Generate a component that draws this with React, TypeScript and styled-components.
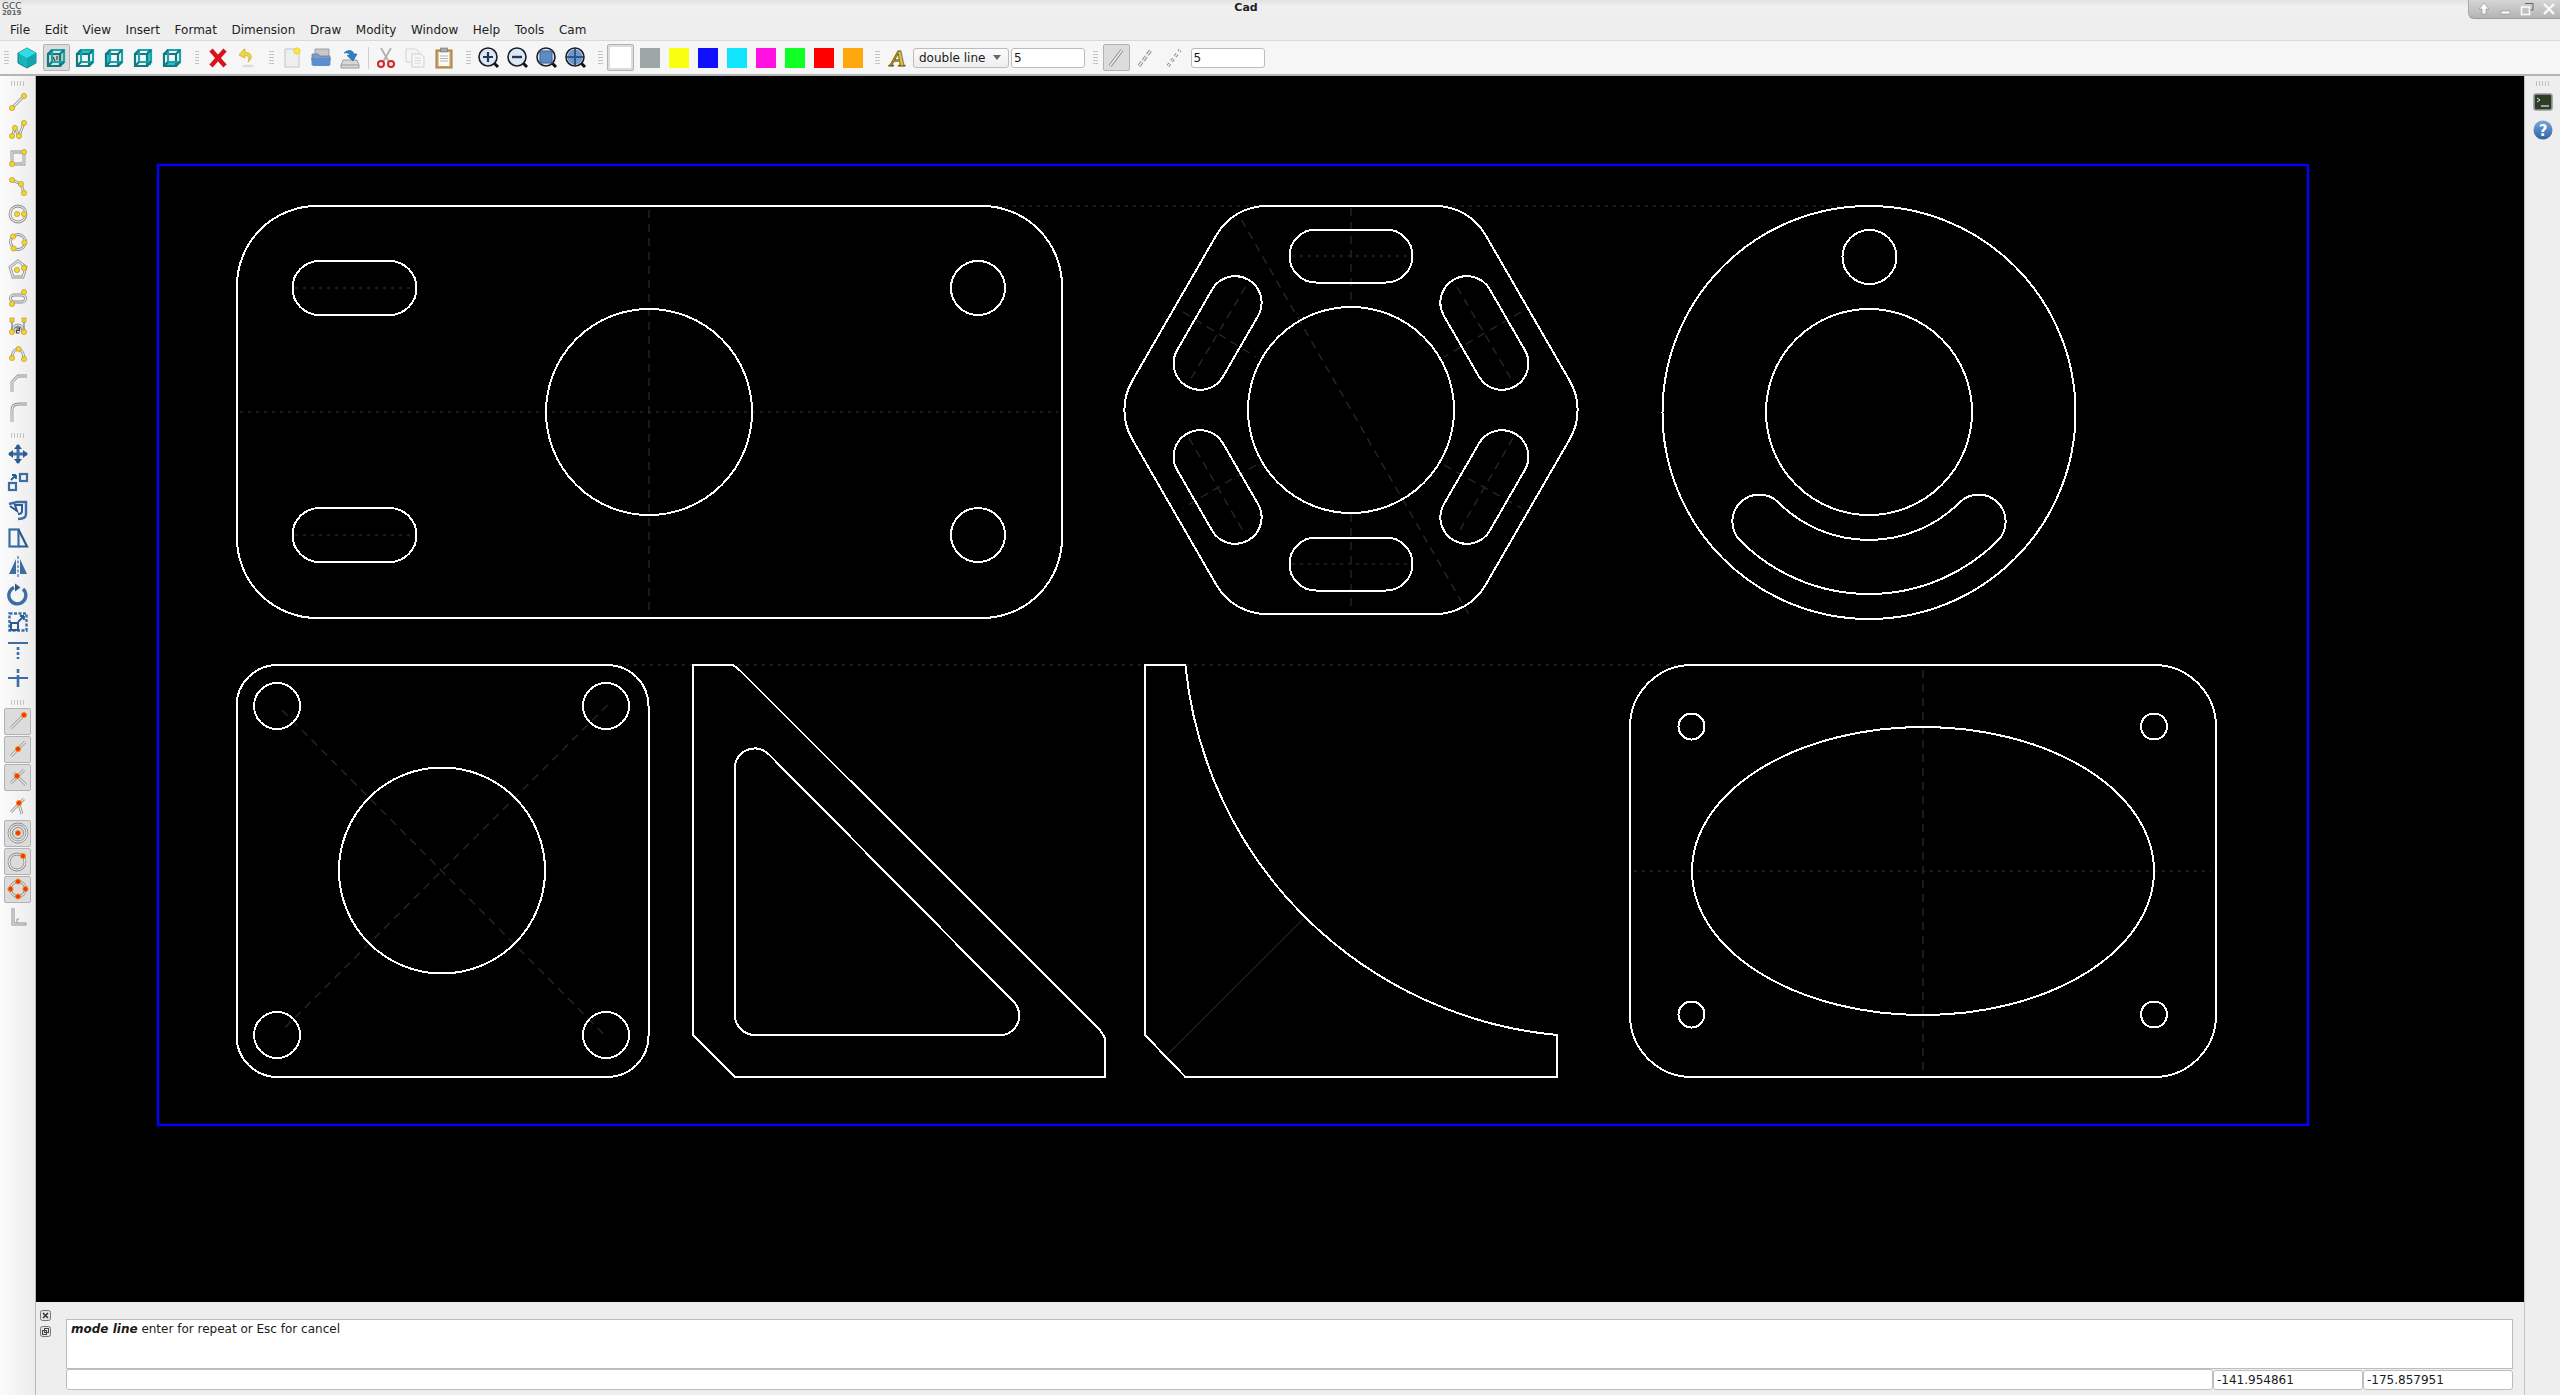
import React from 'react'
import styled, { createGlobalStyle } from 'styled-components'

const GlobalStyle = createGlobalStyle`
    html, body {
        margin: 0;
        padding: 0;
        background: #eeeeee;
    }
    body {
        font-family: 'DejaVu Sans', sans-serif;
        font-size: 12px;
        color: #1a1a1a;
    }
`

const Window = styled.div`
    width: 2560px;
    height: 1395px;
    display: flex;
    flex-direction: column;
    overflow: hidden;
    background: #eeeeee;
`

const TitleRow = styled.div`
    height: 21px;
    display: flex;
    align-items: flex-start;
    background: linear-gradient(#e2e2e2, #efefef 30%, #eeeeee);
`

const Logo = styled.div`
    width: 24px;
    padding: 2px 0 0 2px;
    box-sizing: border-box;
    font-size: 9px;
    line-height: 8px;
    color: #444444;
`

const LogoYear = styled.div`
    font-size: 7px;
    line-height: 7px;
    font-weight: bold;
    color: #666666;
`

const Title = styled.div`
    flex: 1;
    text-align: center;
    font-weight: bold;
    font-size: 11px;
    line-height: 16px;
    color: #222222;
`

const WindowButtons = styled.div`
    width: 92px;
    height: 19px;
    box-sizing: border-box;
    padding: 0 4px 0 8px;
    display: flex;
    align-items: center;
    justify-content: space-between;
    background: linear-gradient(#d6d6d6, #b4b4b4);
    border-bottom: 1px solid #9c9c9c;
    border-left: 1px solid #a8a8a8;
    border-bottom-left-radius: 6px;
`

const MenuBar = styled.div`
    height: 19px;
    padding-left: 2.7px;
    display: flex;
    align-items: center;
    background: #eeeeee;
`

const MenuItem = styled.div`
    padding: 0 7.3px;
    font-size: 12px;
    line-height: 19px;
    color: #222222;
`

const TopBar = styled.div`
    height: 36px;
    box-sizing: border-box;
    display: flex;
    align-items: center;
    background: #f6f6f6;
    border-top: 1px solid #d9d9d9;
    border-bottom: 2px solid #b4b4b4;
`

const Group = styled.div`
    display: flex;
    align-items: center;
    margin-right: 4px;
`

const HandleV = styled.div<{ $narrow?: boolean }>`
    width: ${(p) => (p.$narrow ? '11.5px' : '12.5px')};
    height: 16px;
    flex: none;
    background-image: radial-gradient(circle, #aeaeae 0.7px, transparent 1px);
    background-size: 2.5px 3px;
    background-repeat: repeat;
    background-origin: content-box;
    background-clip: content-box;
    box-sizing: border-box;
    padding: 0 ${(p) => (p.$narrow ? '3.5px' : '4px')};
`

const Separator = styled.div`
    width: 1px;
    height: 22px;
    margin: 0 2.5px 0 3px;
    background: #cfcfcf;
`

const ToolButton = styled.div<{ $checked?: boolean }>`
    width: 27px;
    height: 27px;
    margin: 0 1px;
    flex: none;
    box-sizing: border-box;
    display: flex;
    align-items: center;
    justify-content: center;
    border-radius: 2px;
    border: 1px solid ${(p) => (p.$checked ? '#b2b2b2' : 'transparent')};
    background: ${(p) => (p.$checked ? '#dcdcdc' : 'transparent')};
`

const Swatch = styled.div<{ $color: string }>`
    width: 20px;
    height: 20px;
    background: ${(p) => p.$color};
`

const WhiteSwatch = styled(Swatch)`
    width: 21px;
    height: 21px;
`

const Combo = styled.div`
    width: 96px;
    height: 20px;
    margin-left: 0.5px;
    box-sizing: border-box;
    padding: 0 7px 0 5px;
    display: flex;
    align-items: center;
    justify-content: space-between;
    background: linear-gradient(#fbfbfb, #eeeeee);
    border: 1px solid #bdbdbd;
    border-radius: 3px;
`

const ComboArrow = styled.div`
    width: 0;
    height: 0;
    border-left: 4px solid transparent;
    border-right: 4px solid transparent;
    border-top: 5px solid #666666;
`

const NumberInput = styled.input`
    width: 74px;
    height: 20px;
    box-sizing: border-box;
    padding: 0 2px;
    margin-left: 2px;
    font: 12px 'DejaVu Sans', sans-serif;
    color: #1a1a1a;
    background: #ffffff;
    border: 1px solid #bdbdbd;
    border-radius: 3px;
    outline: none;
`

const Body = styled.div`
    flex: 1;
    display: flex;
    min-height: 0;
`

const LeftBar = styled.div`
    width: 36px;
    flex: none;
    box-sizing: border-box;
    display: flex;
    flex-direction: column;
    align-items: center;
    background: linear-gradient(to right, #fcfcfc, #ececec);
    border-right: 1px solid #b8b8b8;
`

const VGroup = styled.div`
    display: flex;
    flex-direction: column;
    align-items: center;
    margin-bottom: 3.5px;
`

const HandleH = styled.div`
    width: 16px;
    height: 12px;
    box-sizing: border-box;
    padding: 5px 0 2px;
    background-image: radial-gradient(circle, #aeaeae 0.7px, transparent 1px);
    background-size: 3px 2.5px;
    background-origin: content-box;
    background-clip: content-box;
`

const VButton = styled(ToolButton)`
    margin: 0.5px 0;
`

const Center = styled.div`
    flex: 1;
    min-width: 0;
    display: flex;
    flex-direction: column;
`

const CanvasArea = styled.div`
    flex: 1;
    min-height: 0;
    background: #000000;
`

const CanvasSvg = styled.svg`
    display: block;
    width: 100%;
    height: 100%;
`

const Dock = styled.div`
    height: 93px;
    flex: none;
    display: flex;
    background: #eeeeee;
`

const DockTitle = styled.div`
    width: 30px;
    flex: none;
    box-sizing: border-box;
    padding: 8px 0 0 4px;
    display: flex;
    flex-direction: column;
    gap: 5px;
`

const DockButton = styled.svg`
    width: 11px;
    height: 11px;
    display: block;
`

const DockContent = styled.div`
    width: 2447px;
    padding-top: 17px;
    display: flex;
    flex-direction: column;
`

const History = styled.div`
    height: 50px;
    box-sizing: border-box;
    padding: 1px 4px;
    font-size: 12px;
    line-height: 16px;
    background: #ffffff;
    border: 1px solid #bdbdbd;
`

const ModeName = styled.b`
    font-style: italic;
`

const CommandRow = styled.div`
    display: flex;
    align-items: center;
`

const CommandInput = styled.div`
    width: 2147px;
    height: 21px;
    flex: none;
    box-sizing: border-box;
    background: #ffffff;
    border: 1px solid #bdbdbd;
    border-radius: 3px;
`

const CoordField = styled.div`
    flex: 1;
    height: 20px;
    box-sizing: border-box;
    padding-left: 3px;
    font-size: 12px;
    line-height: 18px;
    background: #ffffff;
    border: 1px solid #bdbdbd;
    border-radius: 3px;
`

const RightBar = styled.div`
    width: 36px;
    flex: none;
    box-sizing: border-box;
    display: flex;
    flex-direction: column;
    align-items: center;
    background: #eeeeee;
    border-left: 1px solid #c4c4c4;
`

const SmallButton = styled.div`
    width: 28px;
    height: 28px;
    margin-left: 1px;
    display: flex;
    align-items: center;
    justify-content: center;
`

const Ic = ({ children }: { children: React.ReactNode }) => (
    <svg width="24" height="24" viewBox="0 0 24 24" fill="none" style={{ display: 'block' }}>
        {children}
    </svg>
)

/* ---------- top toolbar icons ---------- */

const SolidCube = () => (
    <Ic>
        <polygon points="12,2 21,7 21,17 12,22 3,17 3,7" fill="#18b4bb" stroke="#127d84" strokeWidth="1" />
        <polygon points="12,2 21,7 12,12 3,7" fill="#30dde2" />
        <polygon points="12,12 21,7 21,17 12,22" fill="#13a5ac" />
    </Ic>
)

const WireCube = ({ face }: { face: number }) => (
    <Ic>
        {face === 0 && <polygon points="8,7 19,7 19,17 8,17" fill="#c9ccc8" />}
        {face === 1 && <polygon points="5,4 16,4 20,8 9,8" fill="#2cc4ca" />}
        {face === 2 && <polygon points="4,8 8,4 8,15 4,19" fill="#2cc4ca" />}
        {face === 3 && <polygon points="16,4 20,8 20,20 16,16" fill="#2cc4ca" />}
        {face === 4 && <polygon points="4,19 16,19 20,15 8,15" fill="#2cc4ca" />}
        <path d="M4 8H16V20H4Z" stroke="#0f7c82" strokeWidth="2.2" />
        <path d="M8 4H20V16H8Z" stroke="#19a5ab" strokeWidth="2.2" />
        <path d="M4 8L8 4M16 8L20 4M16 20L20 16M4 20L8 16" stroke="#0f7c82" strokeWidth="2.2" />
        {face === 0 && <path d="M9 11L11 15M13 10V14" stroke="#222" strokeWidth="1" />}
    </Ic>
)

const DeleteIcon = () => (
    <Ic>
        <path d="M5 4L19 20M19 4L5 20" stroke="#d8121a" strokeWidth="4.4" />
    </Ic>
)

const UndoIcon = () => (
    <Ic>
        <path d="M9 3L4 9L10 12L10 9.5C13 9.5 15 11 13 16C17 14 18.5 6.5 10 6.2V3Z" fill="#f2d53c" stroke="#c9a824" strokeWidth="0.7" />
        <ellipse cx="13" cy="20" rx="6" ry="1.5" fill="#dddddd" />
    </Ic>
)

const NewIcon = () => (
    <Ic>
        <path d="M5 3H19V21H5Z" fill="#efefef" stroke="#c4c4c4" />
        <circle cx="17" cy="5" r="3.2" fill="#f7e743" stroke="#e3c820" strokeWidth="0.6" />
    </Ic>
)

const OpenIcon = () => (
    <Ic>
        <path d="M6 3H20V12H6Z" fill="#c8c8c8" stroke="#8f8f8f" strokeWidth="0.8" />
        <path d="M3 8H9L11 10H21V19H3Z" fill="#7e9cc4" stroke="#6a7f9e" strokeWidth="0.8" />
        <path d="M2 12H22L20 20H4Z" fill="#5b8fd0" />
    </Ic>
)

const SaveIcon = () => (
    <Ic>
        <path d="M5 14L3 19V22H21V19L19 14Z" fill="#d8d8d8" stroke="#8c8c8c" strokeWidth="0.8" />
        <path d="M3 19H21" stroke="#8c8c8c" strokeWidth="0.8" />
        <path d="M6 7C10 3 15 4 16 8L19 8L15 15L9 9.5L12 9C11 7 8.5 6.5 6 7Z" fill="#2e7fc9" stroke="#1c5c9c" strokeWidth="0.6" />
    </Ic>
)

const CutIcon = () => (
    <Ic>
        <path d="M7 2L15 16M17 2L9 16" stroke="#b0b0b0" strokeWidth="1.8" />
        <circle cx="7" cy="18" r="3" stroke="#d8252a" strokeWidth="2" />
        <circle cx="17" cy="18" r="3" stroke="#d8252a" strokeWidth="2" />
    </Ic>
)

const CopyIcon = () => (
    <Ic>
        <path d="M3 3H13L16 6V16H3Z" fill="#f4f4f4" stroke="#d4d4d4" />
        <path d="M9 8H18L21 11V21H9Z" fill="#f7f7f7" stroke="#cfcfcf" />
        <path d="M11.5 12H18M11.5 14.5H18M11.5 17H18" stroke="#d8d8d8" />
    </Ic>
)

const PasteIcon = () => (
    <Ic>
        <rect x="4" y="4" width="16" height="18" fill="#c59a5c" stroke="#a87b3c" />
        <rect x="6.5" y="6" width="11" height="14" fill="#fafafa" />
        <rect x="8.5" y="2" width="7" height="4" fill="#a8a8a8" stroke="#6f6f6f" strokeWidth="0.6" />
        <path d="M8 10H16M8 12.5H16M8 15H16" stroke="#b4b4b4" />
    </Ic>
)

const ZoomIcon = ({ glyph }: { glyph: string }) => (
    <Ic>
        <path d="M17 17L21 21" stroke="#111" strokeWidth="3" />
        <circle cx="11" cy="11" r="9" fill="#dbe9f5" stroke="#1b1b28" strokeWidth="1.6" />
        {glyph === 'in' && <path d="M6 11H16M11 6V16" stroke="#2a3550" strokeWidth="2.2" />}
        {glyph === 'out' && <path d="M6 11H16" stroke="#2a3550" strokeWidth="2.4" />}
        {glyph === 'fit' && <rect x="5" y="5" width="12" height="12" fill="#5f8cc0" stroke="#3c5f90" />}
        {glyph === 'all' && (
            <>
                <circle cx="11" cy="11" r="7.5" fill="#6f97c8" />
                <path d="M3 11H19M11 3V19" stroke="#2f5488" strokeWidth="2" />
            </>
        )}
    </Ic>
)

const FontIcon = () => (
    <Ic>
        <text
            x="12"
            y="20"
            textAnchor="middle"
            fontFamily="'Liberation Serif', serif"
            fontWeight="bold"
            fontStyle="italic"
            fontSize="24"
            fill="#e9c536"
            stroke="#5f5312"
            strokeWidth="0.8"
        >
            A
        </text>
    </Ic>
)

const LineStyle = ({ dash }: { dash?: string }) => (
    <Ic>
        <path d="M6 20L18 4" stroke="#8d8d8d" strokeWidth="3.4" strokeDasharray={dash} />
        <path d="M6 20L18 4" stroke="#f1f1f1" strokeWidth="1.4" strokeDasharray={dash} />
    </Ic>
)

/* ---------- side toolbar icons ---------- */

const Dbl = ({ d }: { d: string }) => (
    <>
        <path d={d} stroke="#8e8e8e" strokeWidth="2.8" />
        <path d={d} stroke="#ededed" strokeWidth="1.2" />
    </>
)

const Dot = ({ x, y }: { x: number; y: number }) => <circle cx={x} cy={y} r="2.6" fill="#f2d534" stroke="#b99c22" strokeWidth="0.7" />

const Snap = ({ x, y }: { x: number; y: number }) => <circle cx={x} cy={y} r="2.6" fill="#ff3300" stroke="#e09a30" strokeWidth="1" />

const circlePath = (cx: number, cy: number, r: number) => `M${cx - r} ${cy}A${r} ${r} 0 1 1 ${cx + r} ${cy}A${r} ${r} 0 1 1 ${cx - r} ${cy}`

const drawIcons: React.ReactNode[] = [
    <Ic key="line">
        <Dbl d="M6 18L18 6" />
        <Dot x={6} y={18} />
        <Dot x={18} y={6} />
    </Ic>,
    <Ic key="poly">
        <Dbl d="M6 18L9 10L13 18L18 5" />
        <Dot x={6} y={18} />
        <Dot x={9} y={10} />
        <Dot x={13} y={18} />
        <Dot x={18} y={5} />
    </Ic>,
    <Ic key="rect">
        <Dbl d="M6 6H18V18H6Z" />
        <Dot x={18} y={6} />
        <Dot x={6} y={18} />
    </Ic>,
    <Ic key="multi">
        <Dbl d="M6 6L15 10L18 19" />
        <Dot x={6} y={6} />
        <Dot x={15} y={10} />
        <Dot x={18} y={19} />
    </Ic>,
    <Ic key="circle">
        <Dbl d={circlePath(12, 12, 8)} />
        <Dot x={11} y={12} />
        <Dot x={18} y={12} />
    </Ic>,
    <Ic key="circle3">
        <Dbl d={circlePath(12, 12, 7.5)} />
        <Dot x={7} y={6.5} />
        <Dot x={18.5} y={12.5} />
        <Dot x={7.5} y={18.5} />
    </Ic>,
    <Ic key="polygon">
        <Dbl d="M12 3L20 9L17 19H7L4 9Z" />
        <Dot x={11} y={12} />
        <Dot x={18} y={10} />
    </Ic>,
    <Ic key="slot">
        <Dbl d="M8 9H16A3.5 3.5 0 0 1 16 16H8A3.5 3.5 0 0 1 8 9Z" />
        <Dot x={18} y={6} />
        <Dot x={6} y={18} />
    </Ic>,
    <Ic key="text">
        <Dbl d="M6 18A6 7 0 0 1 18 18M9 18A3 4 0 0 1 15 18" />
        <rect x="4" y="4" width="4" height="4" fill="#f2d534" stroke="#b99c22" strokeWidth="0.7" />
        <rect x="16" y="4" width="4" height="4" fill="#f2d534" stroke="#b99c22" strokeWidth="0.7" />
        <path d="M6 8V18M18 8V18" stroke="#8e8e8e" strokeWidth="1.4" />
        <path d="M10.5 14H13.5V16.5H10.5V19H13.5" stroke="#444" strokeWidth="1.2" />
        <Dot x={6} y={18} />
        <Dot x={18} y={18} />
    </Ic>,
    <Ic key="arc">
        <Dbl d="M6 16C6 4 18 4 18 17" />
        <Dot x={6} y={16} />
        <Dot x={12.5} y={7} />
        <Dot x={18} y={17} />
    </Ic>,
    <Ic key="chamfer">
        <Dbl d="M6 22V12L12 6H21" />
    </Ic>,
    <Ic key="fillet">
        <Dbl d="M6 24V12Q6 6 13 6H21" />
    </Ic>,
]

const blue = '#3c6ea4'
const deepBlue = '#2c5a92'

const modifyIcons: React.ReactNode[] = [
    <Ic key="move">
        <path d="M12 3V21M3 12H21" stroke={blue} strokeWidth="3" />
        <path d="M12 2L16 7H8ZM12 22L16 17H8ZM2 12L7 8V16ZM22 12L17 8V16Z" fill={deepBlue} />
    </Ic>,
    <Ic key="copy">
        <rect x="14" y="4" width="7" height="7" stroke={blue} strokeWidth="2.2" />
        <rect x="3" y="13" width="7" height="7" stroke={blue} strokeWidth="2.2" />
        <path d="M5 10L10 5M10 5H6M10 5V9" stroke={deepBlue} strokeWidth="1.8" />
    </Ic>,
    <Ic key="offset">
        <path d="M3 6L11 4H20V16C20 19 17 21 12 21" stroke={blue} strokeWidth="2.4" />
        <path d="M4 8L11 13L9 7H16V13C16 15 14 16 12 16" stroke={deepBlue} strokeWidth="2" />
    </Ic>,
    <Ic key="stretch">
        <rect x="3.5" y="3.5" width="9" height="17" stroke={blue} strokeWidth="2.2" />
        <path d="M12.5 3.5L21 20.5H12.5" stroke={deepBlue} strokeWidth="2.2" />
    </Ic>,
    <Ic key="mirror">
        <path d="M10 5V20H3Z" fill={blue} />
        <path d="M14 5V20H21Z" fill={blue} />
        <path d="M12 2V23" stroke="#7fa3cc" strokeWidth="2" strokeDasharray="3 1.5" />
    </Ic>,
    <Ic key="rotate">
        <path d="M17 7A8.5 8.5 0 1 1 8 5.5" stroke={blue} strokeWidth="3.4" />
        <path d="M9 1.5V9.5L14.5 5.5Z" fill={deepBlue} />
    </Ic>,
    <Ic key="scale">
        <rect x="3.5" y="3.5" width="17" height="17" stroke={blue} strokeWidth="2.4" strokeDasharray="3 1.5" />
        <rect x="5" y="13" width="7" height="7" stroke={deepBlue} strokeWidth="2" />
        <path d="M12 12L18 6M18 6H14M18 6V10" stroke={deepBlue} strokeWidth="1.8" />
    </Ic>,
    <Ic key="trim">
        <path d="M2 5H22" stroke={blue} strokeWidth="2" />
        <path d="M12 9V21" stroke={blue} strokeWidth="2.6" strokeDasharray="3 2" />
    </Ic>,
    <Ic key="extend">
        <path d="M2 12H22" stroke={blue} strokeWidth="2" />
        <path d="M12 3V7M12 9V21" stroke={blue} strokeWidth="2.6" />
    </Ic>,
]

const snapIcons: { icon: React.ReactNode; checked: boolean }[] = [
    {
        checked: true,
        icon: (
            <Ic>
                <Dbl d="M5 19L17 7" />
                <Snap x={18} y={6} />
            </Ic>
        ),
    },
    {
        checked: true,
        icon: (
            <Ic>
                <Dbl d="M5 19L19 5" />
                <Snap x={12} y={12} />
            </Ic>
        ),
    },
    {
        checked: true,
        icon: (
            <Ic>
                <Dbl d="M5 18L18 5M8 8L20 20" />
                <Snap x={11} y={11} />
            </Ic>
        ),
    },
    {
        checked: false,
        icon: (
            <Ic>
                <Dbl d="M5 19L18 6M13 11L16 21" />
                <Snap x={13} y={10} />
            </Ic>
        ),
    },
    {
        checked: true,
        icon: (
            <Ic>
                <Dbl d={circlePath(12, 12, 9)} />
                <path d={circlePath(12, 12, 5.5)} stroke="#8e8e8e" strokeWidth="1" />
                <Snap x={12} y={12} />
            </Ic>
        ),
    },
    {
        checked: true,
        icon: (
            <Ic>
                <Dbl d={circlePath(11, 13, 8)} />
                <Snap x={17} y={7} />
            </Ic>
        ),
    },
    {
        checked: true,
        icon: (
            <Ic>
                <Dbl d={circlePath(12, 12, 7.5)} />
                <Snap x={12} y={4.5} />
                <Snap x={12} y={19.5} />
                <Snap x={4.5} y={12} />
                <Snap x={19.5} y={12} />
            </Ic>
        ),
    },
    {
        checked: false,
        icon: (
            <Ic>
                <path d="M6 3V20H20" stroke="#8e8e8e" strokeWidth="1" />
                <path d="M8 3V18H20V20M11 18V14H13" stroke="#8e8e8e" strokeWidth="1" />
            </Ic>
        ),
    },
]

/* ---------- the drawing ---------- */

type Seg = [number, number, number, number]

const partStroke = { fill: 'none', stroke: '#ffffff', strokeWidth: 2, shapeRendering: 'crispEdges' as const }

const roundedPoly = (pts: number[][], r: number) => {
    const t = r * Math.tan(Math.PI / 6)
    const n = pts.length
    let d = ''
    pts.forEach((v, i) => {
        const prev = pts[(i + n - 1) % n]
        const next = pts[(i + 1) % n]
        const lp = Math.hypot(prev[0] - v[0], prev[1] - v[1])
        const ln = Math.hypot(next[0] - v[0], next[1] - v[1])
        const a = [v[0] + ((prev[0] - v[0]) * t) / lp, v[1] + ((prev[1] - v[1]) * t) / lp]
        const b = [v[0] + ((next[0] - v[0]) * t) / ln, v[1] + ((next[1] - v[1]) * t) / ln]
        d += `${i === 0 ? 'M' : 'L'}${a[0]} ${a[1]}A${r} ${r} 0 0 1 ${b[0]} ${b[1]}`
    })
    return d + 'Z'
}

const hexagon = roundedPoly(
    [
        [1233.2, 206],
        [1468.8, 206],
        [1586.6, 410],
        [1468.8, 614],
        [1233.2, 614],
        [1115.4, 410],
    ],
    58,
)

const hexSlots: [number, number, number][] = [
    [1351, 256, 0],
    [1484.4, 333, 60],
    [1484.4, 487, -60],
    [1351, 564, 0],
    [1217.6, 487, 60],
    [1217.6, 333, -60],
]

const dotted: Seg[] = [
    [997, 206, 1846, 206],
    [618, 665, 1677, 665],
    [240, 412, 1058, 412],
    [295, 288, 413, 288],
    [295, 535, 413, 535],
    [1292, 256, 1410, 256],
    [1292, 564, 1410, 564],
    [1634, 871, 2211, 871],
]

const dashed: Seg[] = [
    [649, 210, 649, 615],
    [1351, 208, 1351, 306],
    [1351, 514, 1351, 612],
    [1241.6, 220, 1468.6, 614],
    [1183, 312, 1256, 357],
    [1521, 312, 1444, 357],
    [1256, 465, 1183, 508],
    [1444, 465, 1521, 508],
    [1245.4, 287, 1189, 382],
    [1457, 287, 1513, 382],
    [1189, 438, 1245.4, 535],
    [1513, 438, 1457, 535],
    [282, 710, 605.5, 1036],
    [607.5, 705, 281.6, 1031],
    [1923, 670, 1923, 1075],
]

const Segments = ({ list, dash }: { list: Seg[]; dash: string }) => (
    <path d={list.map((s) => `M${s[0]} ${s[1]}L${s[2]} ${s[3]}`).join('')} stroke="#262626" strokeWidth="1.4" strokeDasharray={dash} fill="none" />
)

const Slot = ({ x, y, angle }: { x: number; y: number; angle: number }) => (
    <rect x={x - 61.5} y={y - 26.5} width="123" height="53" rx="26.5" transform={`rotate(${angle} ${x} ${y})`} {...partStroke} />
)

const Hole = ({ x, y, r }: { x: number; y: number; r: number }) => <circle cx={x} cy={y} r={r} {...partStroke} />

const Drawing = () => (
    <CanvasSvg viewBox="36 76 2488 1226">
        <rect x="158" y="165" width="2150" height="960" fill="none" stroke="#0000ff" strokeWidth="2.4" />
        <Segments list={dotted} dash="3 5" />
        <Segments list={dashed} dash="8 6" />
        <path d="M1305.6 916.7L1167 1055" stroke="#222222" strokeWidth="1.2" />

        <rect x="237" y="206" width="825" height="412" rx="80" {...partStroke} />
        <Hole x={649} y={412} r={103} />
        <rect x="292.5" y="261" width="124" height="54" rx="27" {...partStroke} />
        <rect x="292.5" y="508" width="124" height="54" rx="27" {...partStroke} />
        <Hole x={978} y={288} r={27} />
        <Hole x={978} y={535} r={27} />

        <path d={hexagon} {...partStroke} />
        <Hole x={1351} y={410} r={103} />
        {hexSlots.map((s) => (
            <Slot key={`${s[0]}-${s[1]}`} x={s[0]} y={s[1]} angle={s[2]} />
        ))}

        <Hole x={1869} y={412.5} r={206.5} />
        <Hole x={1869} y={412} r={103} />
        <Hole x={1869.5} y={257} r={27} />
        <path d="M1740.3 540.7A182 182 0 0 0 1997.7 540.7A27 27 0 0 0 1959.5 502.5A128 128 0 0 1 1778.5 502.5A27 27 0 0 0 1740.3 540.7Z" {...partStroke} />

        <rect x="236.5" y="665" width="412" height="412" rx="41" {...partStroke} />
        <Hole x={442} y={870.5} r={103} />
        <Hole x={277} y={706} r={23} />
        <Hole x={606} y={706} r={23} />
        <Hole x={277} y={1035} r={23} />
        <Hole x={606} y={1035} r={23} />

        <path d="M693 665H733L739.5 670L1099.8 1030L1105 1038V1077H735L693 1035Z" {...partStroke} />
        <path d="M735 772A20 20 0 0 1 769.5 755L1011.8 1000A20 20 0 0 1 1004 1035H755A20 20 0 0 1 735 1015Z" {...partStroke} />

        <path d="M1145 665H1185.4A412 412 0 0 0 1557 1035V1077H1185.4L1145 1035Z" {...partStroke} />

        <rect x="1630" y="665" width="586" height="412" rx="62" {...partStroke} />
        <ellipse cx="1923" cy="871" rx="231" ry="144" {...partStroke} />
        <Hole x={1691.5} y={726.5} r={13} />
        <Hole x={2154} y={726.5} r={13} />
        <Hole x={1691.5} y={1014.5} r={13} />
        <Hole x={2154} y={1014.5} r={13} />
    </CanvasSvg>
)

const menus = ['File', 'Edit', 'View', 'Insert', 'Format', 'Dimension', 'Draw', 'Modity', 'Window', 'Help', 'Tools', 'Cam']
const colors = ['#9fa6a8', '#f8ff10', '#1010ff', '#10e4ff', '#ff10e0', '#10ff24', '#ff0000', '#ffa80e']

const App = () => (
    <Window>
        <GlobalStyle />
        <TitleRow>
            <Logo>
                GCC
                <LogoYear>2019</LogoYear>
            </Logo>
            <Title>Cad</Title>
            <WindowButtons>
                <svg width="14" height="14" viewBox="0 0 14 14">
                    <path d="M7 1L12 7H9V12H5V7H2Z" fill="#fafafa" stroke="#8a8a8a" strokeWidth="0.6" />
                </svg>
                <svg width="14" height="14" viewBox="0 0 14 14">
                    <rect x="2" y="9" width="9" height="3" fill="#fafafa" stroke="#8a8a8a" strokeWidth="0.6" />
                </svg>
                <svg width="14" height="14" viewBox="0 0 14 14">
                    <path d="M5 1.5H13V8H9" fill="none" stroke="#666" strokeWidth="1" />
                    <rect x="1.5" y="5" width="8" height="7.5" fill="none" stroke="#fafafa" strokeWidth="1.6" />
                </svg>
                <svg width="14" height="14" viewBox="0 0 14 14">
                    <path d="M2 2L12 12M12 2L2 12" stroke="#fafafa" strokeWidth="2.4" />
                </svg>
            </WindowButtons>
        </TitleRow>
        <MenuBar>
            {menus.map((m) => (
                <MenuItem key={m}>{m}</MenuItem>
            ))}
        </MenuBar>
        <TopBar>
            <Group>
                <HandleV />
                <ToolButton>
                    <SolidCube />
                </ToolButton>
                <ToolButton $checked>
                    <WireCube face={0} />
                </ToolButton>
                <ToolButton>
                    <WireCube face={1} />
                </ToolButton>
                <ToolButton>
                    <WireCube face={2} />
                </ToolButton>
                <ToolButton>
                    <WireCube face={3} />
                </ToolButton>
                <ToolButton>
                    <WireCube face={4} />
                </ToolButton>
            </Group>
            <Group>
                <HandleV />
                <ToolButton>
                    <DeleteIcon />
                </ToolButton>
                <ToolButton>
                    <UndoIcon />
                </ToolButton>
            </Group>
            <Group>
                <HandleV />
                <ToolButton>
                    <NewIcon />
                </ToolButton>
                <ToolButton>
                    <OpenIcon />
                </ToolButton>
                <ToolButton>
                    <SaveIcon />
                </ToolButton>
                <Separator />
                <ToolButton>
                    <CutIcon />
                </ToolButton>
                <ToolButton>
                    <CopyIcon />
                </ToolButton>
                <ToolButton>
                    <PasteIcon />
                </ToolButton>
            </Group>
            <Group>
                <HandleV />
                <ToolButton>
                    <ZoomIcon glyph="in" />
                </ToolButton>
                <ToolButton>
                    <ZoomIcon glyph="out" />
                </ToolButton>
                <ToolButton>
                    <ZoomIcon glyph="fit" />
                </ToolButton>
                <ToolButton>
                    <ZoomIcon glyph="all" />
                </ToolButton>
            </Group>
            <Group>
                <HandleV $narrow />
                <ToolButton $checked>
                    <WhiteSwatch $color="#ffffff" />
                </ToolButton>
                {colors.map((c) => (
                    <ToolButton key={c}>
                        <Swatch $color={c} />
                    </ToolButton>
                ))}
            </Group>
            <Group>
                <HandleV />
                <ToolButton>
                    <FontIcon />
                </ToolButton>
                <Combo>
                    double line
                    <ComboArrow />
                </Combo>
                <NumberInput defaultValue="5" readOnly />
            </Group>
            <Group>
                <HandleV />
                <ToolButton $checked>
                    <LineStyle />
                </ToolButton>
                <ToolButton>
                    <LineStyle dash="5 2" />
                </ToolButton>
                <ToolButton>
                    <LineStyle dash="3 3" />
                </ToolButton>
                <NumberInput defaultValue="5" readOnly />
            </Group>
        </TopBar>
        <Body>
            <LeftBar>
                <VGroup>
                    <HandleH />
                    {drawIcons.map((icon, i) => (
                        <VButton key={i}>{icon}</VButton>
                    ))}
                </VGroup>
                <VGroup>
                    <HandleH />
                    {modifyIcons.map((icon, i) => (
                        <VButton key={i}>{icon}</VButton>
                    ))}
                </VGroup>
                <VGroup>
                    <HandleH />
                    {snapIcons.map((s, i) => (
                        <VButton key={i} $checked={s.checked}>
                            {s.icon}
                        </VButton>
                    ))}
                </VGroup>
            </LeftBar>
            <Center>
                <CanvasArea>
                    <Drawing />
                </CanvasArea>
                <Dock>
                    <DockTitle>
                        <DockButton viewBox="0 0 11 11">
                            <rect x="0.5" y="0.5" width="10" height="10" rx="2" fill="#e4e4e4" stroke="#777" />
                            <path d="M3 3L8 8M8 3L3 8" stroke="#333" strokeWidth="1.6" />
                        </DockButton>
                        <DockButton viewBox="0 0 11 11">
                            <rect x="0.5" y="0.5" width="10" height="10" rx="2" fill="#e4e4e4" stroke="#777" />
                            <rect x="4.5" y="2.5" width="4" height="4" fill="none" stroke="#444" />
                            <rect x="2.5" y="4.5" width="4" height="4" fill="none" stroke="#444" />
                        </DockButton>
                    </DockTitle>
                    <DockContent>
                        <History>
                            <ModeName>mode line</ModeName> enter for repeat or Esc for cancel
                        </History>
                        <CommandRow>
                            <CommandInput />
                            <CoordField>-141.954861</CoordField>
                            <CoordField>-175.857951</CoordField>
                        </CommandRow>
                    </DockContent>
                </Dock>
            </Center>
            <RightBar>
                <HandleH />
                <SmallButton>
                    <svg width="20" height="20" viewBox="0 0 20 20">
                        <rect x="1" y="2" width="18" height="16" rx="2" fill="#2c3e28" stroke="#9a9a9a" strokeWidth="1.6" />
                        <path d="M4 6L7 8L4 10" fill="none" stroke="#e8e8e8" strokeWidth="1" />
                        <path d="M8 14H16" stroke="#e8e8e8" strokeWidth="1.2" />
                    </svg>
                </SmallButton>
                <SmallButton>
                    <svg width="20" height="20" viewBox="0 0 20 20">
                        <defs>
                            <linearGradient id="helpFill" x1="0" y1="0" x2="0" y2="1">
                                <stop offset="0" stopColor="#7aa6da" />
                                <stop offset="1" stopColor="#2d63a6" />
                            </linearGradient>
                        </defs>
                        <circle cx="10" cy="10" r="9.5" fill="url(#helpFill)" />
                        <text x="10" y="15.5" textAnchor="middle" fontFamily="'DejaVu Sans', sans-serif" fontWeight="bold" fontSize="15" fill="#ffffff">
                            ?
                        </text>
                    </svg>
                </SmallButton>
            </RightBar>
        </Body>
    </Window>
)

export default App
